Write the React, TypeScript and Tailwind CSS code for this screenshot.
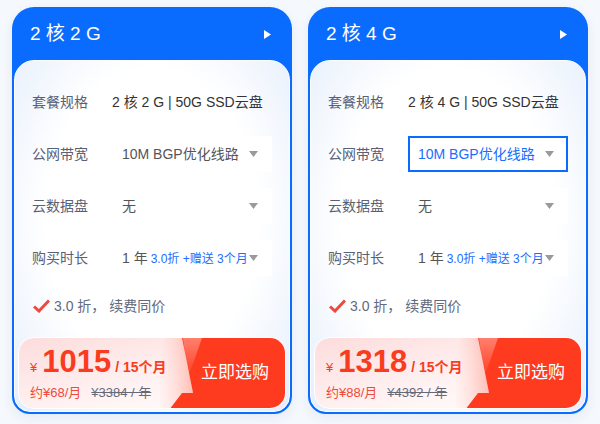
import React from "react";

const FONT = { fontFamily: '"Liberation Sans", "Noto Sans CJK SC", sans-serif' };

function Caret() {
  return (
    <svg width="9" height="6" viewBox="0 0 9 6" className="shrink-0">
      <path d="M0 0 H9 L4.5 6 Z" fill="#9a9a9a" />
    </svg>
  );
}

function Select({ active, children }: { active?: boolean; children: React.ReactNode }) {
  return (
    <div
      className={
        "flex h-[36px] w-[160px] items-center justify-between bg-white " +
        (active ? "border-2 border-[#0a6cfe] pl-[8px] pr-[12px]" : "pl-[10px] pr-[14px]")
      }
    >
      <div className="flex items-baseline whitespace-nowrap">{children}</div>
      <Caret />
    </div>
  );
}

function Card({ title, spec, active, price, monthly, orig }: { title: string; spec: string; active?: boolean; price: string; monthly: string; orig: string }) {
  return (
    <div className="flex h-[407px] w-[280px] flex-col rounded-t-[22px] rounded-b-[18px] bg-[#0a6cfe] p-[2px] shadow-[0_4px_12px_rgba(40,90,180,0.08)]" style={FONT}>
      <div className="flex h-[51px] items-center justify-between pl-[16px] pr-[19px] text-white">
        <span className="text-[19px] whitespace-pre">{title}</span>
        <svg width="7" height="9" viewBox="0 0 7 9">
          <path d="M0 0 L7 4.5 L0 9 Z" fill="#ffffff" />
        </svg>
      </div>
      <div className="flex flex-1 flex-col rounded-t-[20px] rounded-b-[16px] border border-white bg-[radial-gradient(ellipse_at_50%_45%,#ffffff_55%,#e4eefc_100%)] pt-[23px]">
        <div className="flex flex-col gap-[16px] px-[17px]">
          <div className="flex h-[36px] items-center text-[14px] whitespace-nowrap">
            <span className="w-[80px] text-[#5b6074]">套餐规格</span>
            <span className="text-[#333333]">{spec}</span>
          </div>
          <div className="flex h-[36px] items-center text-[14px]">
            <span className="w-[80px] text-[#5b6074]">公网带宽</span>
            <Select active={active}>
              <span className={active ? "text-[#1a6dff]" : "text-[#555555]"}>10M BGP优化线路</span>
            </Select>
          </div>
          <div className="flex h-[36px] items-center text-[14px]">
            <span className="w-[80px] text-[#5b6074]">云数据盘</span>
            <Select>
              <span className="text-[#555555]">无</span>
            </Select>
          </div>
          <div className="flex h-[36px] items-center text-[14px]">
            <span className="w-[80px] text-[#5b6074]">购买时长</span>
            <Select>
              <span className="text-[14px] text-[#555555]">1 年</span>
              <span className="ml-[3px] text-[12px] text-[#1a6dff]">3.0折 +赠送 3个月</span>
            </Select>
          </div>
        </div>
        <div className="mt-[20px] flex h-[20px] items-center gap-[4px] px-[18px] text-[14px] text-[#646a7c]">
          <svg width="17" height="14" viewBox="0 0 17 14">
            <path d="M1 7.5 L6 12 L16 1.5" fill="none" stroke="#f0483c" strokeWidth="3" strokeLinejoin="miter" />
          </svg>
          <span>3.0 折， 续费同价</span>
        </div>
        <div className="mx-[3px] mb-[2px] mt-auto flex h-[72px] overflow-hidden rounded-[16px] border border-white bg-[linear-gradient(165deg,#fddcdc_0%,#fff2f2_55%,#ffffff_100%)]">
          <div className="relative z-10 flex min-w-0 flex-1 flex-col justify-center whitespace-nowrap pl-[11px] pt-[1px]">
            <div className="flex items-baseline text-[#fa3c1e]">
              <span className="mr-[5px] text-[13px]">¥</span>
              <span className="text-[31px] font-bold leading-[34px]">{price}</span>
              <span className="ml-[4px] text-[14px] font-bold">/ 15个月</span>
            </div>
            <div className="mt-[4px] flex items-center gap-[10px] text-[13px]">
              <span className="text-[#f04a3a]">{monthly}</span>
              <span className="text-[#666a78] line-through">{orig}</span>
            </div>
          </div>
          <div className="relative flex w-[125px] shrink-0 items-center justify-center pl-[25px]">
            <svg className="absolute inset-0" width="125" height="72" viewBox="0 0 125 72">
              <defs>
                <linearGradient id={"band" + price} x1="0" y1="0" x2="1" y2="0">
                  <stop offset="0" stopColor="#ffffff" stopOpacity="0.2" />
                  <stop offset="1" stopColor="#ff7a66" stopOpacity="0.45" />
                </linearGradient>
                <linearGradient id={"hl" + price} x1="0" y1="0" x2="0" y2="1">
                  <stop offset="0" stopColor="#ffffff" stopOpacity="0.35" />
                  <stop offset="1" stopColor="#ffffff" stopOpacity="0" />
                </linearGradient>
              </defs>
              <path d="M4 0 H22 L33 55 H22 L9 72 H-6 Z" fill={"url(#band" + price + ")"} />
              <path d="M22 0 H125 V72 H9 L22 55 H33 Z" fill="#ff3b1f" />
              <path d="M23 0 H42 L28 40 Z" fill={"url(#hl" + price + ")"} />
            </svg>
            <span className="relative text-[17px] text-white">立即选购</span>
          </div>
        </div>
      </div>
    </div>
  );
}

export default function App() {
  return (
    <div className="flex h-[424px] w-[600px] gap-[16px] bg-[#f5f8fc] px-[12px] pt-[7px]">
      <Card title="2 核 2 G" spec="2 核 2 G | 50G SSD云盘" price="1015" monthly="约¥68/月" orig="¥3384 / 年" />
      <Card title="2 核 4 G" spec="2 核 4 G | 50G SSD云盘" active price="1318" monthly="约¥88/月" orig="¥4392 / 年" />
    </div>
  );
}
